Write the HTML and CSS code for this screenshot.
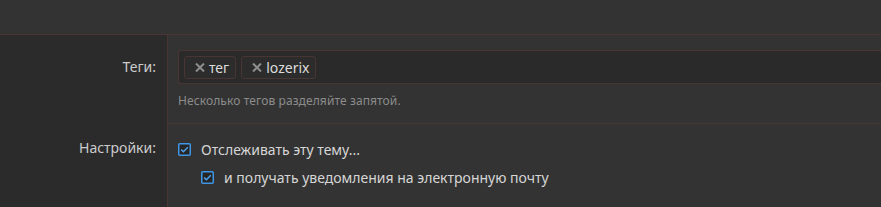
FILE: index.html
```html
<!DOCTYPE html>
<html lang="ru">
<head>
<meta charset="utf-8">
<title>Теги</title>
<link rel="stylesheet" href="styles.css">
</head>
<body>
<div class="header"></div>
<div class="form">
  <div class="row">
    <div class="label label-tags">Теги:</div>
    <div class="field field-tags">
      <div class="tag-input">
        <span class="tag"><svg class="tag-x" width="10" height="9" viewBox="0 0 10 9"><path d="M1 0.5 L9 8.5 M9 0.5 L1 8.5" stroke="#8e8e8e" stroke-width="2"/></svg>тег</span>
        <span class="tag"><svg class="tag-x" width="10" height="9" viewBox="0 0 10 9"><path d="M1 0.5 L9 8.5 M9 0.5 L1 8.5" stroke="#8e8e8e" stroke-width="2"/></svg>lozerix</span>
      </div>
      <div class="hint">Несколько тегов разделяйте запятой.</div>
    </div>
  </div>
  <div class="row">
    <div class="label label-settings">Настройки:</div>
    <div class="field field-settings">
      <label class="check">
        <svg class="box" width="13" height="13" viewBox="0 0 13 13"><rect x="0.75" y="0.75" width="11.5" height="11.5" rx="1" fill="#262626" stroke="#3f95e6" stroke-width="1.5"/><path d="M3.2 6.6 L5.4 8.7 L9.8 4.3" fill="none" stroke="#4ea3ee" stroke-width="1.5"/></svg>
        <span>Отслеживать эту тему...</span>
      </label>
      <label class="check check-sub">
        <svg class="box" width="13" height="13" viewBox="0 0 13 13"><rect x="0.75" y="0.75" width="11.5" height="11.5" rx="1" fill="#262626" stroke="#3f95e6" stroke-width="1.5"/><path d="M3.2 6.6 L5.4 8.7 L9.8 4.3" fill="none" stroke="#4ea3ee" stroke-width="1.5"/></svg>
        <span>и получать уведомления на электронную почту</span>
      </label>
    </div>
  </div>
</div>
</body>
</html>
```
FILE: styles.css
```css
html, body {
  margin: 0;
  padding: 0;
}
body {
  background: #333333;
  font-family: "Noto Sans", "Open Sans", sans-serif;
  font-size: 13px;
  color: #d2d2d2;
  overflow: hidden;
}
.header {
  height: 34px;
  background: #333333;
}
.form {
  border-top: 1px solid #4a3535;
}
.row {
  display: grid;
  grid-template-columns: 168px 1fr;
}
.label {
  background: #2b2b2b;
  border-right: 1px solid #4a3535;
  text-align: right;
  padding-right: 11px;
  color: #cccccc;
  font-size: 14px;
}
.label-tags {
  padding-top: 22px;
}
.label-settings {
  padding-top: 14px;
}
.field {
  background: #333333;
}
.field-tags {
  padding: 15px 0 14px 10px;
  border-bottom: 1px solid #4a3535;
  height: 59px;
}
.tag-input {
  background: #2a2a2a;
  border: 1px solid #4a3535;
  border-right: none;
  border-radius: 3px 0 0 3px;
  height: 32px;
  display: flex;
  align-items: center;
  gap: 5px;
  padding-left: 5px;
}
.tag {
  display: inline-flex;
  align-items: center;
  height: 21px;
  border: 1px solid #4a3535;
  border-radius: 3px;
  padding: 0 6px 0 10px;
  font-size: 14px;
  color: #dddddd;
  background: #2c2c2c;
}
.tag-x {
  flex: none;
  margin-right: 4px;
  margin-top: 1px;
}
.hint {
  margin-top: 8px;
  font-size: 12px;
  color: #8c8c8c;
  letter-spacing: 0.1px;
}
.field-settings {
  padding: 14px 0 0 10px;
  height: 70px;
}
.check {
  display: flex;
  align-items: center;
  gap: 10px;
  height: 22px;
  font-size: 14px;
  color: #d6d6d6;
}
.check-sub {
  margin-top: 6px;
  margin-left: 23px;
}
.box {
  flex: none;
}
```
